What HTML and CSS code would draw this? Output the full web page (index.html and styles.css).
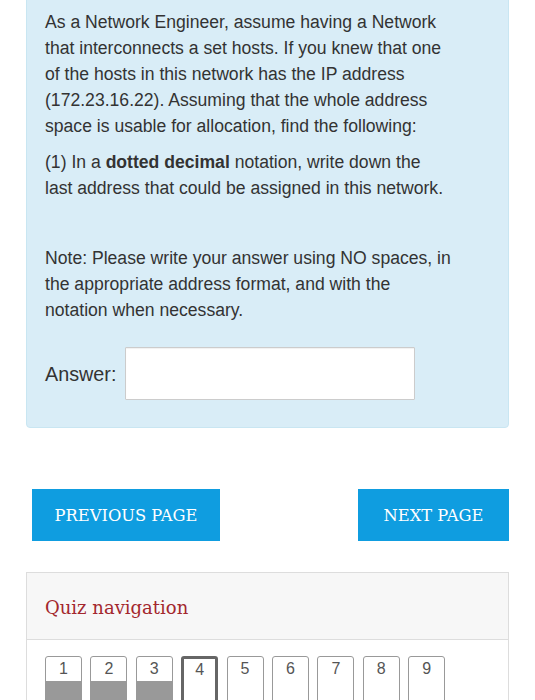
FILE: index.html
```html
<!DOCTYPE html>
<html>
<head>
<meta charset="utf-8">
<link rel="stylesheet" href="styles.css">
</head>
<body>
<div class="page">
  <div class="formulation">
    <p class="para">As a Network Engineer, assume having a Network<br>that interconnects a set hosts. If you knew that one<br>of the hosts in this network has the IP address<br>(172.23.16.22). Assuming that the whole address<br>space is usable for allocation, find the following:</p>
    <p class="para">(1) In a <b>dotted decimal</b> notation, write down the<br>last address that could be assigned in this network.</p>
    <p class="para note">Note: Please write your answer using NO spaces, in<br>the appropriate address format, and with the<br>notation when necessary.</p>
    <div class="answer">
      <label class="answer-label">Answer:</label>
      <input class="answer-input" type="text">
    </div>
  </div>

  <div class="nav-buttons">
    <button class="btn">PREVIOUS PAGE</button>
    <button class="btn">NEXT PAGE</button>
  </div>

  <div class="quiz-nav">
    <div class="quiz-nav-header">Quiz navigation</div>
    <div class="quiz-nav-body">
      <span class="qbtn answered"><span class="qnum">1</span><span class="qfill"></span></span>
      <span class="qbtn answered"><span class="qnum">2</span><span class="qfill"></span></span>
      <span class="qbtn answered"><span class="qnum">3</span><span class="qfill"></span></span>
      <span class="qbtn current"><span class="qnum">4</span><span class="qfill"></span></span>
      <span class="qbtn"><span class="qnum">5</span><span class="qfill"></span></span>
      <span class="qbtn"><span class="qnum">6</span><span class="qfill"></span></span>
      <span class="qbtn"><span class="qnum">7</span><span class="qfill"></span></span>
      <span class="qbtn"><span class="qnum">8</span><span class="qfill"></span></span>
      <span class="qbtn"><span class="qnum">9</span><span class="qfill"></span></span>
    </div>
  </div>
</div>
</body>
</html>
```

FILE: styles.css
```css
html, body {
  margin: 0;
  padding: 0;
  background: #ffffff;
}

body {
  font-family: "Liberation Sans", Arial, sans-serif;
  color: #333333;
  overflow: hidden;
}

.page {
  width: 483px;
  margin-left: 26px;
}

.formulation {
  margin-top: -10px;
  background: #d9edf7;
  border: 1px solid #c9e6f2;
  border-radius: 4px;
  padding: 18px 18px 27px 18px;
}

.para {
  margin: 0 0 10px 0;
  font-size: 17.6px;
  line-height: 26px;
  color: #333333;
}

.para b {
  font-weight: bold;
}

.note {
  margin-top: 44px;
  margin-bottom: 0;
}

.answer {
  display: flex;
  align-items: center;
  margin-top: 24px;
}

.answer-label {
  font-size: 19.8px;
  line-height: 26px;
  color: #333333;
  margin-right: 9px;
}

.answer-input {
  box-sizing: border-box;
  width: 290px;
  height: 53px;
  border: 1px solid #cccccc;
  border-radius: 1px;
  background: #ffffff;
  box-shadow: inset 0 1px 1px rgba(0,0,0,0.06);
  margin: 0;
  padding: 0 8px;
}

.nav-buttons {
  display: flex;
  justify-content: space-between;
  margin-top: 61px;
  padding-left: 6px;
}

.btn {
  height: 52px;
  border: none;
  border-radius: 0;
  background: #0f9de0;
  color: #ffffff;
  font-family: "DejaVu Serif", "Liberation Serif", serif;
  font-size: 16.3px;
  padding: 0 16px;
  margin: 0;
}

.btn:first-child {
  width: 188px;
}

.btn:last-child {
  width: 151px;
}

.quiz-nav {
  margin-top: 31px;
  border: 1px solid #dddddd;
  border-bottom: none;
}

.quiz-nav-header {
  height: 67px;
  background: #f7f7f7;
  border-bottom: 1px solid #dddddd;
  padding-left: 18px;
  padding-top: 2px;
  box-sizing: border-box;
  display: flex;
  align-items: center;
  font-family: "DejaVu Serif", "Liberation Serif", serif;
  font-size: 18px;
  color: #a3272d;
}

.quiz-nav-body {
  display: flex;
  gap: 8.4px;
  padding: 16px 18px 0 18px;
  height: 60px;
}

.qbtn {
  box-sizing: border-box;
  width: 37px;
  height: 60px;
  border: 1px solid #999999;
  border-radius: 3px;
  display: flex;
  flex-direction: column;
  overflow: hidden;
  background: #ffffff;
}

.qnum {
  height: 24px;
  line-height: 24px;
  text-align: center;
  font-size: 16px;
  color: #555555;
}

.qfill {
  flex: 1;
}

.answered .qfill {
  background: #999999;
}

.current {
  border: 3px solid #666666;
}

.current .qnum {
  height: 22px;
  line-height: 22px;
}
```
